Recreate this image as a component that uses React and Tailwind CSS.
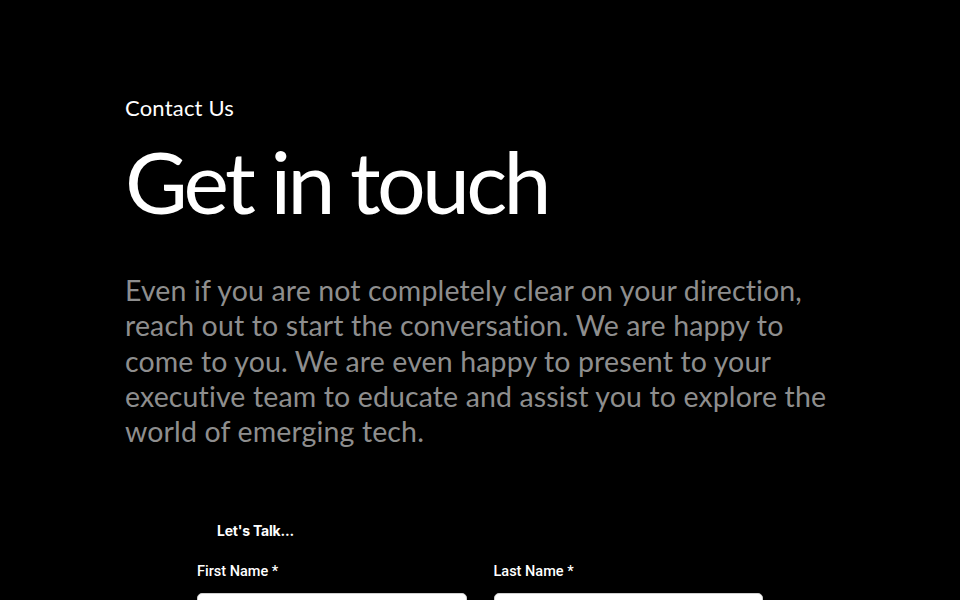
export default function App() {
  return (
    <div className="min-h-[600px] w-full bg-black overflow-hidden">
      <div className="pl-[125px] pt-[94px]">
        <div className="text-[22px] leading-[28px] text-white font-normal font-['Lato',sans-serif] tracking-[0.2px]">Contact Us</div>
        <h1 className="mt-[14px] text-[86px] leading-[90px] text-white font-normal font-['Lato',sans-serif] tracking-[-3.7px]">Get in touch</h1>
        <p className="mt-[47px] text-[28.5px] leading-[35.3px] text-[#8e8e8e] font-normal font-['Lato',sans-serif] tracking-[0.13px] whitespace-nowrap">
          Even if you are not completely clear on your direction,<br />
          reach out to start the conversation. We are happy to<br />
          come to you. We are even happy to present to your<br />
          executive team to educate and assist you to explore the<br />
          world of emerging tech.
        </p>
      </div>
      <div className="mx-auto mt-[72px] w-[566px]">
        <div className="pl-[20px] text-[14px] leading-[20px] font-bold text-white font-['Inter',sans-serif] tracking-[-0.2px]">Let's Talk...</div>
        <div className="mt-[22px] grid grid-cols-2 gap-[27px]">
          <div>
            <div className="text-[14.5px] leading-[18px] font-medium text-white font-['Roboto',sans-serif]">First Name *</div>
            <div className="mt-[12px] h-[40px] rounded-[5px] border border-[#cfcfcf] bg-white" />
          </div>
          <div>
            <div className="text-[14.5px] leading-[18px] font-medium text-white font-['Roboto',sans-serif]">Last Name *</div>
            <div className="mt-[12px] h-[40px] rounded-[5px] border border-[#cfcfcf] bg-white" />
          </div>
        </div>
      </div>
    </div>
  );
}
